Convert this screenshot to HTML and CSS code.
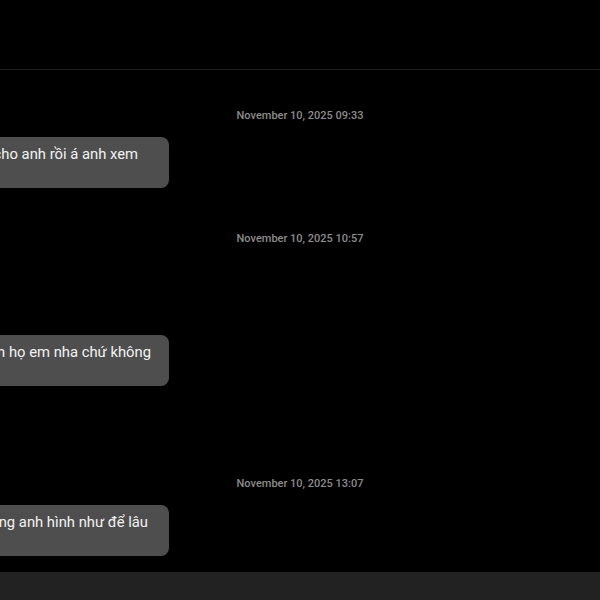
FILE: index.html
```html
<!DOCTYPE html>
<html lang="vi">
<head>
<meta charset="utf-8">
<title>Chat</title>
<link rel="stylesheet" href="styles.css">
</head>
<body>
<div class="app">
  <header class="topbar"></header>
  <main class="thread">
    <div class="stamp stamp-first">November 10, 2025 09:33</div>
    <div class="row">
      <div class="bubble pr-a"><span>anh gửi cho anh rồi á anh xem</span></div>
    </div>
    <div class="stamp stamp-mid">November 10, 2025 10:57</div>
    <div class="row row-far">
      <div class="bubble pr-b"><span>anh là anh họ em nha chứ không</span></div>
    </div>
    <div class="stamp stamp-far">November 10, 2025 13:07</div>
    <div class="row">
      <div class="bubble pr-c"><span>cái này trong anh hình như để lâu</span></div>
    </div>
  </main>
  <footer class="composer"></footer>
</div>
</body>
</html>
```

FILE: styles.css
```css
* { box-sizing: border-box; }
html, body {
  margin: 0;
  padding: 0;
  background: #000;
  height: 100%;
  overflow: hidden;
}
body {
  font-family: Roboto, "Noto Sans", sans-serif;
  color: #f2f2f2;
}
.app {
  display: flex;
  flex-direction: column;
  height: 600px;
  width: 600px;
  overflow: hidden;
}
.topbar {
  height: 70px;
  flex: 0 0 70px;
  border-bottom: 1px solid #1f1f1f;
}
.thread {
  flex: 1;
  display: flex;
  flex-direction: column;
}
.stamp {
  text-align: center;
  font-size: 11px;
  font-weight: 500;
  line-height: 18px;
  padding-top: 1px;
  color: #8c8c8c;
}
.stamp-first { margin-top: 36px; }
.stamp-mid { margin-top: 41px; }
.stamp-far { margin-top: 88px; }
.row {
  margin-top: 12px;
  display: flex;
}
.row-far { margin-top: 87px; }
.bubble {
  width: 400px;
  margin-left: -231px;
  height: 51px;
  background: #4e4e4e;
  border-radius: 8px;
  padding: 6px 0 0 0;
  font-size: 14.8px;
  line-height: 22px;
  white-space: nowrap;
  overflow: hidden;
  text-align: right;
}
.pr-a { padding-right: 31px; }
.pr-b { padding-right: 18px; }
.pr-c { padding-right: 21px; }
.composer {
  height: 28px;
  flex: 0 0 28px;
  background: #222;
}
```
